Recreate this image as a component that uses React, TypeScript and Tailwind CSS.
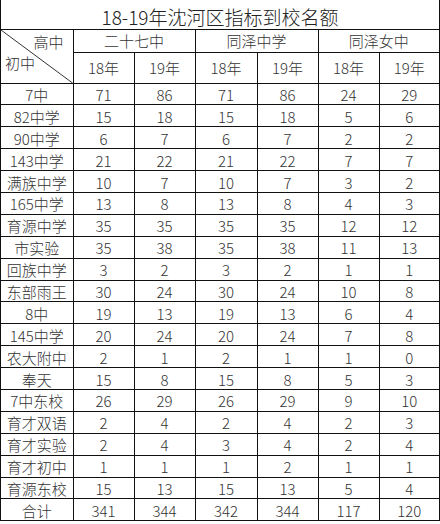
const font = '"Noto Sans CJK SC", "Noto Sans", sans-serif';

type Row = [string, number, number, number, number, number, number];

const rows: Row[] = [
  ["7中", 71, 86, 71, 86, 24, 29],
  ["82中学", 15, 18, 15, 18, 5, 6],
  ["90中学", 6, 7, 6, 7, 2, 2],
  ["143中学", 21, 22, 21, 22, 7, 7],
  ["满族中学", 10, 7, 10, 7, 3, 2],
  ["165中学", 13, 8, 13, 8, 4, 3],
  ["育源中学", 35, 35, 35, 35, 12, 12],
  ["市实验", 35, 38, 35, 38, 11, 13],
  ["回族中学", 3, 2, 3, 2, 1, 1],
  ["东部雨王", 30, 24, 30, 24, 10, 8],
  ["8中", 19, 13, 19, 13, 6, 4],
  ["145中学", 20, 24, 20, 24, 7, 8],
  ["农大附中", 2, 1, 2, 1, 1, 0],
  ["奉天", 15, 8, 15, 8, 5, 3],
  ["7中东校", 26, 29, 26, 29, 9, 10],
  ["育才双语", 2, 4, 2, 4, 2, 3],
  ["育才实验", 2, 4, 3, 4, 2, 4],
  ["育才初中", 1, 1, 1, 2, 1, 1],
  ["育源东校", 15, 13, 15, 13, 5, 4],
  ["合计", 341, 344, 342, 344, 117, 120],
];

const cell = "border border-[#111] text-center align-middle p-0 leading-none";

export default function App() {
  return (
    <div className="h-[524px] w-[440px] overflow-hidden bg-white">
      <table
        className="w-[439px] table-fixed border-collapse text-[15px] font-light text-[#333]"
        style={{ fontFamily: font }}
      >
        <colgroup>
          <col className="w-[72.5px]" />
          <col className="w-[61px]" />
          <col className="w-[61px]" />
          <col className="w-[62px]" />
          <col className="w-[61px]" />
          <col className="w-[61px]" />
          <col className="w-[60.5px]" />
        </colgroup>
        <tbody>
          <tr className="h-[29px]">
            <td colSpan={7} className={`${cell} border-t-0 pt-[4px] text-[19px] text-[#222]`}>
              18-19年沈河区指标到校名额
            </td>
          </tr>
          <tr className="h-[23px]">
            <td rowSpan={2} className={`${cell} relative`}>
              <svg
                className="absolute inset-0 h-full w-full"
                viewBox="0 0 100 100"
                preserveAspectRatio="none"
                aria-hidden="true"
              >
                <line x1="0" y1="0" x2="100" y2="100" stroke="#333" strokeWidth="1" vectorEffect="non-scaling-stroke" />
              </svg>
              <div className="relative flex h-[53px] flex-col justify-between px-[4px] pt-[4px] pb-[13px]">
                <span className="self-end pr-[5px]">高中</span>
                <span className="self-start">初中</span>
              </div>
            </td>
            <td colSpan={2} className={cell}>二十七中</td>
            <td colSpan={2} className={cell}>同泽中学</td>
            <td colSpan={2} className={cell}>同泽女中</td>
          </tr>
          <tr className="h-[31px]">
            {["18年", "19年", "18年", "19年", "18年", "19年"].map((y, i) => (
              <td key={i} className={cell}>
                {y}
              </td>
            ))}
          </tr>
          {rows.map((r) => (
            <tr key={r[0]} className="h-[21.9px]">
              {r.map((v, i) => (
                <td key={i} className={`${cell} pt-[1px]`}>
                  {v}
                </td>
              ))}
            </tr>
          ))}
        </tbody>
      </table>
    </div>
  );
}
